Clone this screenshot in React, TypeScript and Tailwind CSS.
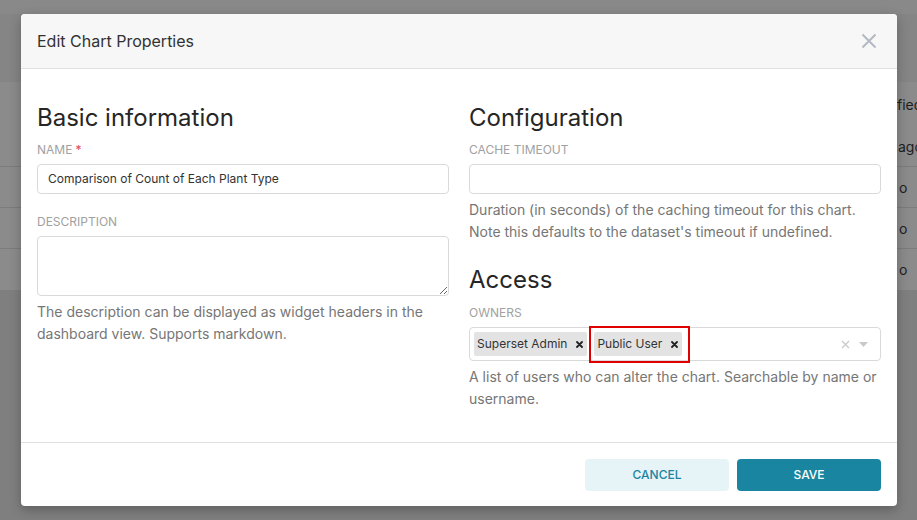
import React from "react";

const font = { fontFamily: "Inter, 'Noto Sans', sans-serif" };

function Label({ text, required, className }: { text: string; required?: boolean; className: string }) {
  return (
    <div className={"text-[12px] leading-4 text-[#a1a1a1] uppercase " + className}>
      {text}
      {required && <span className="text-[#e04355] ml-[3px]">*</span>}
    </div>
  );
}

function Tag({ text, highlight }: { text: string; highlight?: boolean }) {
  return (
    <span className="relative flex items-center h-[24px] bg-[#e3e3e3] rounded-[2px] pl-[3px] pr-[4px] text-[12px] text-[#333]">
      <span>{text}</span>
      <svg width="7" height="7" viewBox="0 0 7 7" className="ml-[9px]">
        <path d="M1 1L6 6M6 1L1 6" stroke="#222" strokeWidth="1.8" strokeLinecap="round" />
      </svg>
      {highlight && (
        <span className="absolute left-[-5px] right-[-8px] top-[-6px] bottom-[-7px] border-2 border-[#e00000]" />
      )}
    </span>
  );
}

export default function App() {
  return (
    <div className="relative w-[917px] h-[520px] overflow-hidden bg-[#7f7f7f]" style={font}>
      {/* background page under overlay */}
      <div className="flex flex-col">
        <div className="h-[14px] bg-[#898989]" />
        <div className="h-[68px] bg-[#858585]" />
        <div className="bg-[#8b8b8b] text-[14px] text-[#1e1e1e]">
          <div className="grid grid-cols-[864px_1fr] h-[44px] items-center">
            <div />
            <div className="whitespace-nowrap">Modified</div>
          </div>
          <div className="grid grid-cols-[897px_1fr] h-[41px] items-center border-b border-[#7c7c7c]">
            <div />
            <div className="whitespace-nowrap pl-[1px]">ago</div>
          </div>
          <div className="grid grid-cols-[897px_1fr] h-[41px] items-center border-b border-[#7c7c7c]">
            <div />
            <div className="whitespace-nowrap pl-[2px]">o</div>
          </div>
          <div className="grid grid-cols-[897px_1fr] h-[41px] items-center border-b border-[#7c7c7c]">
            <div />
            <div className="whitespace-nowrap pl-[2px]">o</div>
          </div>
          <div className="grid grid-cols-[897px_1fr] h-[41px] items-center">
            <div />
            <div className="whitespace-nowrap pl-[2px]">o</div>
          </div>
        </div>
      </div>

      {/* modal */}
      <div className="absolute left-[21px] top-[14px] w-[876px] h-[492px] bg-white rounded-[4px] shadow-[0_4px_12px_rgba(0,0,0,0.25)] flex flex-col overflow-hidden">
        <div className="h-[55px] shrink-0 bg-[#f7f7f7] border-b border-[#e0e0e0] flex items-center justify-between pl-4 pr-5">
          <div className="text-[16px] text-[#323232]">Edit Chart Properties</div>
          <svg width="16" height="16" viewBox="0 0 16 16">
            <path d="M1.5 1.5L14.5 14.5M14.5 1.5L1.5 14.5" stroke="#b3b9c4" strokeWidth="2" />
          </svg>
        </div>

        <div className="flex-1 px-4 pt-[33px] grid grid-cols-2 gap-x-5">
          {/* left column */}
          <div className="flex flex-col">
            <h4 className="text-[24px] leading-8 text-[#262626]">Basic information</h4>
            <Label text="Name" required className="mt-[8px]" />
            <div className="mt-[6px] h-[30px] border border-[#d9d9d9] rounded-[4px] flex items-center px-[10px] text-[12px] text-[#333]">
              Comparison of Count of Each Plant Type
            </div>
            <Label text="Description" className="mt-[20px]" />
            <textarea className="mt-[6px] h-[60px] border border-[#d9d9d9] rounded-[4px] outline-none" />
            <p className="mt-[5px] text-[14px] leading-[22px] text-[#767676]">
              The description can be displayed as widget headers in the dashboard view. Supports markdown.
            </p>
          </div>

          {/* right column */}
          <div className="flex flex-col">
            <h4 className="text-[24px] leading-8 text-[#262626]">Configuration</h4>
            <Label text="Cache timeout" className="mt-[8px]" />
            <div className="mt-[6px] h-[30px] border border-[#d9d9d9] rounded-[4px]" />
            <p className="mt-[5px] text-[14px] leading-[22px] text-[#767676]">
              Duration (in seconds) of the caching timeout for this chart. Note this defaults to the dataset's timeout if undefined.
            </p>
            <h4 className="mt-[21px] text-[24px] leading-8 text-[#262626]">Access</h4>
            <Label text="Owners" className="mt-[9px]" />
            <div className="mt-[6px] h-[34px] border border-[#d9d9d9] rounded-[4px] flex items-center pl-[4px] pr-[12px]">
              <div className="flex items-center gap-[7px] flex-1">
                <Tag text="Superset Admin" />
                <Tag text="Public User" highlight />
              </div>
              <svg width="9" height="9" viewBox="0 0 9 9" className="mr-[9px]">
                <path d="M1 1L8 8M8 1L1 8" stroke="#c9c9c9" strokeWidth="1.2" />
              </svg>
              <svg width="9" height="5" viewBox="0 0 9 5">
                <path d="M0 0H9L4.5 5Z" fill="#c9c9c9" />
              </svg>
            </div>
            <p className="mt-[5px] text-[14px] leading-[22px] text-[#767676]">
              A list of users who can alter the chart. Searchable by name or username.
            </p>
          </div>
        </div>

        <div className="h-[64px] shrink-0 border-t border-[#e0e0e0] flex items-start justify-end gap-2 pt-4 pr-4">
          <button className="w-[144px] h-[32px] rounded-[4px] bg-[#e6f4f8] text-[#1a85a0] text-[12px] font-medium">
            CANCEL
          </button>
          <button className="w-[144px] h-[32px] rounded-[4px] bg-[#1a85a0] text-white text-[12px] font-medium">
            SAVE
          </button>
        </div>
      </div>
    </div>
  );
}
